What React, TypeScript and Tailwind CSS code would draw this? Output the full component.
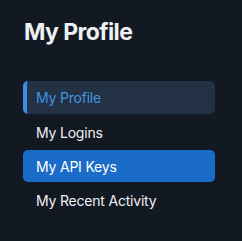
export default function App() {
  const items = [
    { label: "My Profile", state: "current" },
    { label: "My Logins", state: "" },
    { label: "My API Keys", state: "active" },
    { label: "My Recent Activity", state: "" },
  ];
  return (
    <div
      className="w-[242px] h-[241px] bg-[#131922] pl-[23px] pt-[16px]"
      style={{ fontFamily: "Inter, 'Liberation Sans', sans-serif" }}
    >
      <h1 className="text-[23px] leading-[32px] font-bold text-[#eef0f3] pl-px tracking-[-0.6px]">My Profile</h1>
      <nav className="mt-[33px] w-[192px] flex flex-col gap-[2px]">
        {items.map((it) =>
          it.state === "current" ? (
            <div
              key={it.label}
              className="h-[33px] flex items-center rounded-[5px] bg-[#223244] border-l-[4px] border-[#3a8ee6] pl-[9px] text-[14px] tracking-[-0.2px] text-[#4292e2]"
            >
              {it.label}
            </div>
          ) : it.state === "active" ? (
            <div
              key={it.label}
              className="h-[32px] flex items-center rounded-[5px] bg-[#1b6cc8] pl-[13px] text-[14px] tracking-[-0.2px] text-white"
            >
              {it.label}
            </div>
          ) : (
            <div
              key={it.label}
              className="h-[32px] flex items-center pl-[13px] text-[14px] tracking-[-0.2px] text-[#eef0f3]"
            >
              {it.label}
            </div>
          )
        )}
      </nav>
    </div>
  );
}
